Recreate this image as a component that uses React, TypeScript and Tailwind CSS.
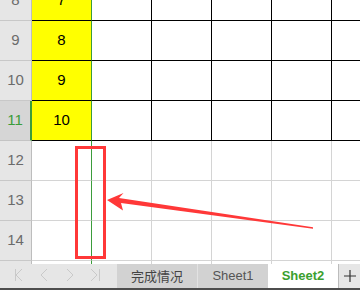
const dataRows = [
  { n: 8, v: "7" },
  { n: 9, v: "8" },
  { n: 10, v: "9" },
  { n: 11, v: "10" },
]
const emptyRows = [12, 13, 14, 15]
const cols = [0, 1, 2, 3, 4, 5]

function NavArrows() {
  return (
    <svg width="117" height="24" viewBox="0 0 117 24" fill="none" stroke="#c9c9c9" strokeWidth="1">
      <path d="M15.5 5v12M22 5l-6 6 6 6" />
      <path d="M47 5l-6 6 6 6" />
      <path d="M67 5l6 6-6 6" />
      <path d="M91 5l6 6-6 6M99.5 5v12" />
    </svg>
  )
}

export default function App() {
  return (
    <div className="relative w-[360px] h-[290px] overflow-hidden bg-white font-['Liberation_Sans',sans-serif]">
      <div className="h-[264px] overflow-hidden">
        <div className="-mt-[19px] flex flex-col">
          {dataRows.map((r) => (
            <div key={r.n} className="flex h-[40px]">
              <div
                className={
                  r.n === 11
                    ? "w-[32px] shrink-0 flex items-center justify-center bg-[#d6d6d6] border-b border-b-[#c4c4c4] border-r-2 border-r-[#3b9c3b] text-[#3b9c3b] text-[15px]"
                    : "w-[32px] shrink-0 flex items-center justify-center bg-[#e6e6e6] border-b border-b-[#c8c8c8] border-r border-r-[#bdbdbd] text-[#6b6b6b] text-[15px]"
                }
              >
                {r.n}
              </div>
              {cols.map((c) => (
                <div
                  key={c}
                  className={
                    c === 0
                      ? "w-[60px] shrink-0 flex items-center justify-center bg-[#ffff00] border-b border-b-black border-r border-r-[#3b9c3b] text-black text-[15px]"
                      : "w-[60px] shrink-0 border-b border-b-black border-r border-r-black"
                  }
                >
                  {c === 0 ? r.v : null}
                </div>
              ))}
            </div>
          ))}
          {emptyRows.map((n) => (
            <div key={n} className="flex h-[40px]">
              <div className="w-[32px] shrink-0 flex items-center justify-center bg-[#e6e6e6] border-b border-b-[#c8c8c8] border-r border-r-[#bdbdbd] text-[#6b6b6b] text-[15px]">
                {n < 15 ? n : null}
              </div>
              {cols.map((c) => (
                <div
                  key={c}
                  className={
                    c === 0
                      ? "w-[60px] shrink-0 border-b border-b-[#d4d4d4] border-r border-r-[#3b9c3b]"
                      : "w-[60px] shrink-0 border-b border-b-[#d4d4d4] border-r border-r-[#d4d4d4]"
                  }
                />
              ))}
            </div>
          ))}
        </div>
      </div>

      <div className="flex h-[24px] bg-[#e6e6e6]">
        <div className="w-[117px] shrink-0">
          <NavArrows />
        </div>
        <div className="w-[81px] shrink-0 flex items-center justify-center bg-[#d2d2d2] border-r border-r-[#e2e2e2] text-[13px] text-[#444] font-['Noto_Sans_CJK_SC',sans-serif]">
          完成情况
        </div>
        <div className="w-[70px] shrink-0 flex items-center justify-center bg-[#d2d2d2] text-[13px] text-[#555]">
          Sheet1
        </div>
        <div className="w-[71px] shrink-0 flex items-center justify-center bg-white border-r border-r-[#bcbcbc] text-[13px] font-bold text-[#3ba02f]">
          Sheet2
        </div>
        <div className="flex-1 flex items-center justify-center">
          <svg width="14" height="14" viewBox="0 0 14 14" stroke="#333" strokeWidth="1.2">
            <path d="M7 1v12M1 7h12" />
          </svg>
        </div>
      </div>
      <div className="h-[2px] bg-[#4d4d4d]" />

      <div className="absolute left-[75px] top-[146px] w-[31px] h-[113px] border-[3px] border-[#ff3838]" />
      <svg className="absolute left-0 top-0" width="360" height="290" viewBox="0 0 360 290">
        <polygon
          points="107,200 123.5,193 119,198 313,227.3 313,228.7 121,203 123,210.5"
          fill="#ff3838"
        />
      </svg>
    </div>
  )
}
